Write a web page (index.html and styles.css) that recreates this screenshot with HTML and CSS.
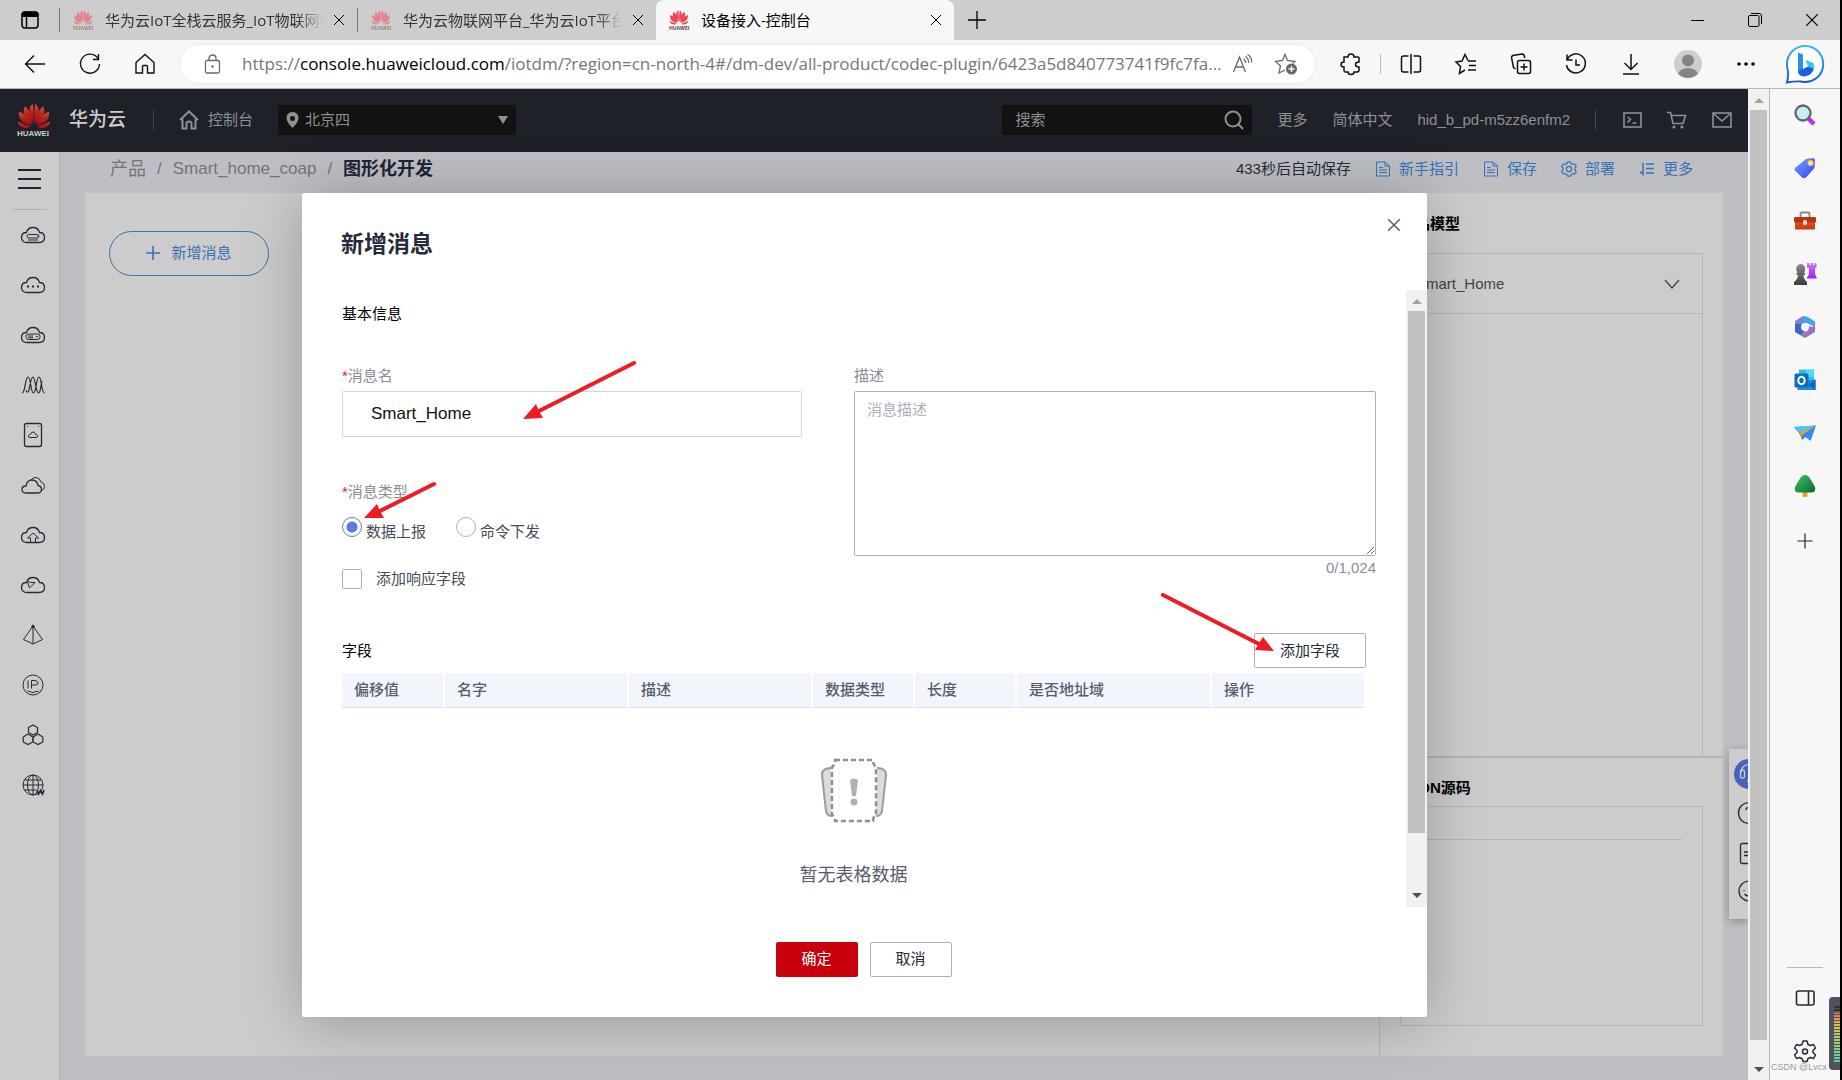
FILE: index.html
```html
<!DOCTYPE html>
<html lang="zh-CN">
<head>
<meta charset="utf-8">
<title>设备接入-控制台</title>
<link rel="stylesheet" href="styles.css">
</head>
<body>
<svg class="defs" aria-hidden="true">
  <defs>
    <linearGradient id="petal-red" x1="0" y1="0" x2="0" y2="1"><stop offset="0" stop-color="#c9573a"/><stop offset="0.5" stop-color="#b81f1c"/><stop offset="1" stop-color="#a01015"/></linearGradient>
    <linearGradient id="bing" x1="0" y1="0" x2="0" y2="1"><stop offset="0" stop-color="#35bdf0"/><stop offset="1" stop-color="#1b56d8"/></linearGradient>
    <linearGradient id="tag" x1="0" y1="0" x2="1" y2="1"><stop offset="0" stop-color="#6aa8ff"/><stop offset="1" stop-color="#3d3dff"/></linearGradient>
    <linearGradient id="box" x1="0" y1="0" x2="0" y2="1"><stop offset="0" stop-color="#e0521c"/><stop offset="1" stop-color="#c93a0c"/></linearGradient>
    <linearGradient id="rook" x1="0" y1="0" x2="0" y2="1"><stop offset="0" stop-color="#c77dff"/><stop offset="1" stop-color="#a31cf5"/></linearGradient>
    <linearGradient id="pawn" x1="0" y1="0" x2="0" y2="1"><stop offset="0" stop-color="#8a8a8a"/><stop offset="1" stop-color="#3c3c3c"/></linearGradient>
    <linearGradient id="tree" x1="0" y1="0" x2="1" y2="1"><stop offset="0" stop-color="#3ac463"/><stop offset="1" stop-color="#0a6b32"/></linearGradient>
    <symbol id="petals" viewBox="0 0 40 30">
      <path d="M19.500 23C14 15 12 5 18.500 0.500C19.500 5 20 15 19.500 23ZM20.500 23C26 15 28 5 21.500 0.500C20.500 5 20 15 20.500 23Z"/>
      <path d="M18 24C10 19 5 10 9.500 3.500C14 7 17.500 15 18 24ZM22 24C30 19 35 10 30.500 3.500C26 7 22.500 15 22 24Z"/>
      <path d="M17 25.500C7 25 0.500 18 2.500 10C9 12 14.500 18 17 25.500ZM23 25.500C33 25 39.500 18 37.500 10C31 12 25.500 18 23 25.500Z"/>
      <path d="M16.500 27C10 31.500 3 29 0.800 21.500C6 24 12 26.500 16.500 27ZM23.500 27C30 31.500 37 29 39.200 21.500C34 24 28 26.500 23.500 27Z"/>
    </symbol>
    <symbol id="cloud" viewBox="0 0 26 20"><path d="M7 17.500C3.500 17.500 1.500 15.500 1.500 12.500C1.500 9.500 3.500 7.500 6.500 7.500C7.500 4 10 2.500 13 2.500C16 2.500 18.500 4 19.500 7.500C22.500 7.500 24.500 9.500 24.500 12.500C24.500 15.500 22.500 17.500 19 17.500Z" stroke-width="1.300"/></symbol>
    <symbol id="cross" viewBox="0 0 12 12"><path d="M1 1L11 11M11 1L1 11"/></symbol>
    <symbol id="doc" viewBox="0 0 16 16"><path d="M1.500 1H10L14.500 5V15H1.500ZM10 1V5H14.500M4 6.500H8M4 9H12M4 11.500H12"/></symbol>
  </defs>
</svg>

<header class="tabbar">
  <button class="tab-actions" aria-label="标签操作">
    <svg class="ln" width="20" height="20" viewBox="0 0 20 20"><rect x="2" y="2" width="16" height="16" rx="3" stroke-width="1.500"/><path d="M2 4Q2 2 4 2H16Q18 2 18 4V6.500H2Z" fill="#000"/><path d="M6.500 6V18" stroke-width="1.500"/></svg>
  </button>
  <div class="tab">
    <div class="favicon faded"><svg width="20" height="15"><use href="#petals"/></svg><span>HUAWEI</span></div>
    <span class="tab-title">华为云IoT全栈云服务_IoT物联网解</span>
    <button class="tab-close" aria-label="关闭"><svg class="ln" width="12" height="12"><use href="#cross"/></svg></button>
  </div>
  <div class="tab">
    <div class="favicon faded"><svg width="20" height="15"><use href="#petals"/></svg><span>HUAWEI</span></div>
    <span class="tab-title">华为云物联网平台_华为云IoT平台</span>
    <button class="tab-close" aria-label="关闭"><svg class="ln" width="12" height="12"><use href="#cross"/></svg></button>
  </div>
  <div class="tab active">
    <div class="favicon"><svg width="20" height="15"><use href="#petals"/></svg><span>HUAWEI</span></div>
    <span class="tab-title">设备接入-控制台</span>
    <button class="tab-close" aria-label="关闭"><svg class="ln" width="12" height="12"><use href="#cross"/></svg></button>
  </div>
  <button class="new-tab" aria-label="新建标签"><svg class="ln" width="18" height="18" viewBox="0 0 18 18"><path d="M9 0V18M0 9H18" stroke-width="1.300"/></svg></button>
  <div class="window-buttons">
    <button aria-label="最小化"><svg class="ln" width="14" height="14" viewBox="0 0 14 14"><path d="M0 7.500H13"/></svg></button>
    <button aria-label="还原"><svg class="ln" width="14" height="14" viewBox="0 0 14 14"><rect x="0.500" y="2.500" width="10.500" height="11" rx="1.500"/><path d="M3 0.500H11Q13.500 0.500 13.500 3V11"/></svg></button>
    <button aria-label="关闭窗口"><svg class="ln" width="14" height="14" viewBox="0 0 12 12"><use href="#cross"/></svg></button>
  </div>
</header>

<div class="toolbar">
  <div class="nav-buttons">
    <button aria-label="后退"><svg class="ln" width="22" height="22" viewBox="0 0 22 22"><path d="M21 11H2M10 2.500L1.500 11L10 19.500" stroke-width="1.400"/></svg></button>
    <button aria-label="刷新"><svg class="ln" width="22" height="22" viewBox="0 0 22 22"><path d="M19 5.500A9.500 9.500 0 1 0 20.500 11M19.500 1V6.500H14" stroke-width="1.400"/></svg></button>
    <button aria-label="主页"><svg class="ln" width="22" height="22" viewBox="0 0 22 22"><path d="M2 9.500L11 1.500L20 9.500V20H13.500V13.500Q13.500 12.500 12.500 12.500H9.500Q8.500 12.500 8.500 13.500V20H2Z" stroke-width="1.400"/></svg></button>
  </div>
  <div class="address">
    <svg class="ln gray" width="18" height="20" viewBox="0 0 18 20"><rect x="1.500" y="6.500" width="14" height="12.500" rx="1.500" stroke-width="1.300"/><path d="M5 6.500V4.500Q5 1 8.500 1Q12 1 12 4.500V6.500" stroke-width="1.300"/><circle cx="8.500" cy="12.500" r="0.800" fill="#555"/></svg>
    <a class="url" href="#">https://<b>console.huaweicloud.com</b>/iotdm/?region=cn-north-4#/dm-dev/all-product/codec-plugin/6423a5d840773741f9fc7fa...</a>
    <button aria-label="朗读"><svg class="ln gray" width="22" height="20" viewBox="0 0 22 20"><path d="M1.500 18L7.500 3L13.500 18M3.500 13H11.500M11.500 5Q14 6.500 13.500 9M13.500 2.500Q17 5 16.500 9M15.500 0.500Q20 3 19.500 8.500" stroke-width="1.300"/></svg></button>
    <button aria-label="收藏"><svg class="ln gray" width="24" height="22" viewBox="0 0 24 22"><path d="M11 17L5 20L6.500 13L1.500 8.500L8.500 7.500L11 1.500L13.500 7.500L21 8.500L18.500 10.500" stroke-width="1.300"/><circle cx="17.500" cy="16" r="5.500" fill="#666" stroke="none"/><path d="M17.500 13V19M14.500 16H20.500" stroke="#fff" stroke-width="1.300"/></svg></button>
  </div>
  <div class="tools">
    <button aria-label="扩展"><svg class="ln" width="22" height="22" viewBox="0 0 22 22"><path d="M4 4H8Q8 1 11 1Q14 1 14 4H18Q19 4 19 5V9Q15.500 9 15.500 11.500Q15.500 14 19 14V17Q19 19 17 19H14Q14 21.500 11 21.500Q8 21.500 8 19H5Q4 19 4 17V14Q1 14 1 11.500Q1 9 4 9Z" stroke-width="1.500"/></svg></button>
    <span class="tool-divider"></span>
    <button aria-label="分屏"><svg class="ln" width="22" height="22" viewBox="0 0 22 22"><path d="M8.500 3H3.500Q1.500 3 1.500 5V17Q1.500 19 3.500 19H8.500M13.500 3H18.500Q20.500 3 20.500 5V17Q20.500 19 18.500 19H13.500M11 1V21" stroke-width="1.500"/></svg></button>
    <button aria-label="收藏夹"><svg class="ln" width="22" height="22" viewBox="0 0 22 22"><path d="M13 7.500L10 1.500L7 8L1 9L5.500 13.500L4.500 20.500L10 17M13 8H21M14 12.500H21M13 17H21" stroke-width="1.500"/></svg></button>
    <button aria-label="集锦"><svg class="ln" width="22" height="22" viewBox="0 0 22 22"><rect x="7.500" y="7.500" width="13" height="13" rx="2" stroke-width="1.500"/><path d="M14 10.500V17.500M10.500 14H17.500M5.500 16L3.500 14.500L1.500 4.500Q1.500 3 3 2.500L12 1Q14 1 14.500 3.500V5" stroke-width="1.500"/></svg></button>
    <button aria-label="历史记录"><svg class="ln" width="22" height="22" viewBox="0 0 22 22"><path d="M2 7A9.500 9.500 0 1 1 1.500 12M2 1.500V7H7.500M11 6.500V12H15" stroke-width="1.500"/></svg></button>
    <button aria-label="下载"><svg class="ln" width="22" height="22" viewBox="0 0 22 22"><path d="M11 1V16M4.500 10L11 16.500L17.500 10M3 21H19" stroke-width="1.500"/></svg></button>
    <button class="profile" aria-label="个人资料"><svg width="28" height="28" viewBox="0 0 28 28"><clipPath id="av"><circle cx="14" cy="14" r="14"/></clipPath><g clip-path="url(#av)"><rect width="28" height="28" fill="#cfcdca"/><circle cx="14" cy="10.500" r="6" fill="#878380"/><ellipse cx="14" cy="24.500" rx="10" ry="6.500" fill="#878380"/></g></svg></button>
    <button aria-label="更多选项"><svg width="20" height="6" viewBox="0 0 20 6"><circle cx="3" cy="3" r="1.800"/><circle cx="10" cy="3" r="1.800"/><circle cx="17" cy="3" r="1.800"/></svg></button>
    <button class="bing" aria-label="必应"><svg width="40" height="40" viewBox="0 0 40 40"><path d="M20 2A18 18 0 1 1 16 37.500Q10 37 2 38.500Q3.500 33 3 27Q2 24 2 20A18 18 0 0 1 20 2Z" fill="#fff" stroke="url(#bing)" stroke-width="2"/><path d="M13 8.500L18 10.500V26L13 30Z" fill="#2a8df0"/><path d="M13 27L18 25L24 22L29 24Q28 31 19 32.500Q14 32.500 13 27Z" fill="#1c5fe0"/><path d="M20.500 16L27.500 18.500Q30 21 29 25L23 22.500Z" fill="#2fd0d8"/></svg></button>
  </div>
</div>

<div class="workspace">
  <div class="site">
    <header class="site-header">
      <div class="brand">
        <div class="brand-mark"><svg width="34" height="26"><use href="#petals"/></svg><span>HUAWEI</span></div>
        <strong>华为云</strong>
      </div>
      <span class="bar"></span>
      <a class="console-link" href="#"><svg class="ln" width="20" height="20" viewBox="0 0 20 20"><path d="M1 10L10 1.500L19 10M3.500 9V18.500H7.500V13Q7.500 11.500 10 11.500Q12.500 11.500 12.500 13V18.500H16.500V9" stroke-width="2"/></svg>控制台</a>
      <div class="region">
        <svg width="13" height="16" viewBox="0 0 13 16"><path fill="#8d9097" fill-rule="evenodd" d="M6.500 0Q12.500 0.500 12.500 6Q12.500 10 6.500 16Q0.500 10 0.500 6Q0.500 0.500 6.500 0ZM6.500 4A2.500 2.500 0 1 0 6.500 9A2.500 2.500 0 1 0 6.500 4Z"/></svg>
        <select aria-label="区域"><option>北京四</option></select>
        <span class="caret"></span>
      </div>
      <div class="search">
        <input type="text" placeholder="搜索" aria-label="搜索">
        <svg class="ln" width="20" height="20" viewBox="0 0 20 20"><circle cx="9" cy="9" r="7.500" stroke-width="2"/><path d="M14 14L19 19" stroke-width="2"/></svg>
      </div>
      <nav class="account">
        <a href="#">更多</a><a href="#">简体中文</a><a href="#">hid_b_pd-m5zz6enfm2</a>
      </nav>
      <span class="bar account-bar"></span>
      <div class="header-icons">
        <svg class="ln" width="19" height="18" viewBox="0 0 19 18"><rect x="1" y="2" width="17" height="14" stroke-width="1.600"/><path d="M4.500 6L7.500 8.500L4.500 11.500M9.500 12H13.500" stroke-width="1.600"/></svg>
        <svg class="ln" width="20" height="18" viewBox="0 0 20 18"><path d="M0 1.500H3.500L6 12.500H16L18.500 4.500H4.500" stroke-width="1.600"/><circle cx="7" cy="16" r="0.800" stroke-width="1.600"/><circle cx="15" cy="16" r="0.800" stroke-width="1.600"/></svg>
        <svg class="ln" width="20" height="18" viewBox="0 0 20 18"><rect x="1" y="2" width="18" height="14" stroke-width="1.600"/><path d="M2 3L10 10L18 3" stroke-width="1.600"/></svg>
      </div>
    </header>

    <div class="site-body">
      <nav class="rail">
        <button class="menu" aria-label="菜单"><span></span><span></span><span></span></button>
        <div class="rail-icons">
          <a href="#" aria-label="云服务器"><svg class="ln" width="26" height="20" viewBox="0 0 26 20"><use href="#cloud"/><rect x="7" y="9.500" width="12" height="3.500" rx="1.700"/><path d="M8 15H18M17 11.200H18"/></svg></a>
          <a href="#" aria-label="裸金属"><svg class="ln" width="26" height="20" viewBox="0 0 26 20"><use href="#cloud"/><path d="M7 11.500H9M12 11.500H14M17 11.500H19" stroke-width="2"/></svg></a>
          <a href="#" aria-label="云主机"><svg class="ln" width="26" height="20" viewBox="0 0 26 20"><use href="#cloud"/><rect x="6" y="9" width="14" height="5.500" rx="2.500"/><path d="M8 11H13M8 12.800H13M16 11.700H18"/></svg></a>
          <a href="#" aria-label="弹性伸缩"><svg class="ln" width="26" height="20" viewBox="0 0 26 20"><path d="M2 18C5.500 18 5 2 8 2S10.500 18 13.500 18S16 2 19 2S21 18 24.500 18M6 15C6.500 18 8 18 9 15C10.500 8 11 2 13 2S16 18 18.500 18S20.500 10 22 6" stroke-width="1.200"/></svg></a>
          <a href="#" aria-label="硬盘"><svg class="ln" width="26" height="24" viewBox="0 0 26 24"><rect x="4.500" y="0.500" width="17" height="23" rx="2" stroke-width="1.300"/><path d="M10 14.500Q8 14.500 8.500 12.500Q9 11.500 10.500 11.500Q11 9 13 9Q15 9 15.500 11.500Q17 11.500 17.500 12.500Q18 14.500 16 14.500ZM7 3.500H8M18 3.500H19"/></svg></a>
          <a href="#" aria-label="存储"><svg class="ln" width="26" height="20" viewBox="0 0 26 20"><path d="M6 18Q2 18 2 14.500Q2 11 6 11Q7 5 12 5Q17 5 18 10.500Q21.500 11 21.500 14.500Q21.500 18 17 18Z" stroke-width="1.300"/><path d="M11 5Q13 2 16 2.500Q20 3 21 7Q24.500 8 24.500 11.500Q24.500 14.500 22 15"/></svg></a>
          <a href="#" aria-label="上传"><svg class="ln" width="26" height="20" viewBox="0 0 26 20"><use href="#cloud"/><path d="M10.500 17V13H7.500L13 8L18.500 13H15.500V17"/></svg></a>
          <a href="#" aria-label="监控"><svg class="ln" width="26" height="20" viewBox="0 0 26 20"><use href="#cloud"/><path d="M7.500 7L9.500 13L15 7.500Q11 8 8 6.500"/></svg></a>
          <a href="#" aria-label="金字塔"><svg class="ln" width="26" height="20" viewBox="0 0 26 20"><path d="M13 1V19M13 1L3.500 14.500L13 19L22.500 14.500L13 1"/><circle cx="13" cy="1.500" r="1.300" fill="#252b3a"/></svg></a>
          <a href="#" aria-label="弹性公网"><svg class="ln" width="26" height="22" viewBox="0 0 26 22"><circle cx="13" cy="11" r="10"/><path d="M8 6.500V14.500M11.500 14.500V6.500H15Q18 7 18 9Q18 11 15 11H11.500M7.500 17Q13 20 18.500 17"/></svg></a>
          <a href="#" aria-label="区块"><svg class="ln" width="26" height="22" viewBox="0 0 26 22"><path d="M13 1L17.500 3.500V8.500L13 11L8.500 8.500V3.500ZM8 10L12.800 13V18L8 20.500L3.200 18V13ZM18 10L22.800 13V18L18 20.500L13.200 18V13Z" stroke-width="1.200"/></svg></a>
          <a href="#" aria-label="域名"><svg class="ln" width="26" height="22" viewBox="0 0 26 22"><circle cx="13" cy="11" r="10"/><ellipse cx="13" cy="11" rx="5.500" ry="10"/><path d="M13 1V21M3 11H23M4.500 6H21.500M4.500 16H16"/><path d="M17 16L18.500 20L20.500 16.500L22.500 20L24 16" stroke-width="1.700"/></svg></a>
        </div>
      </nav>

      <main class="content">
        <div class="crumb-row">
          <nav class="crumbs"><a class="crumb-root" href="#">产品</a><span>/</span><a href="#">Smart_home_coap</a><span>/</span><strong>图形化开发</strong></nav>
          <div class="page-actions">
            <span class="autosave">433秒后自动保存</span>
            <a href="#"><svg class="ln" width="16" height="16"><use href="#doc"/></svg>新手指引</a>
            <a href="#"><svg class="ln" width="16" height="16"><use href="#doc"/></svg>保存</a>
            <a href="#"><svg class="ln" width="16" height="16" viewBox="0 0 16 16"><path d="M6 2.500L6.500 0.800H9.500L10 2.500L12 3.500L13.800 3L15.300 5.500L14 7V9L15.300 10.500L13.800 13L12 12.500L10 13.500L9.500 15.200H6.500L6 13.500L4 12.500L2.200 13L0.700 10.500L2 9V7L0.700 5.500L2.200 3L4 3.500Z" stroke-width="1.200" stroke-linejoin="round"/><circle cx="8" cy="8" r="2.600" stroke-width="1.200"/></svg>部署</a>
            <a href="#"><svg class="ln" width="16" height="16" viewBox="0 0 16 16"><path d="M4 2V13.500L1 10.500M7 3H15M7 7.500H15M7 12H15" stroke-width="1.500"/></svg>更多</a>
          </div>
        </div>
        <div class="board">
          <section class="canvas">
            <button class="add-message"><svg class="ln" width="14" height="14" viewBox="0 0 14 14"><path d="M7 0V14M0 7H14" stroke-width="1.600"/></svg>新增消息</button>
          </section>
          <aside class="model">
            <section class="model-top">
              <h2>产品模型</h2>
              <div class="model-box">
                <button class="model-row">Smart_Home<svg class="ln" width="16" height="10" viewBox="0 0 16 10"><path d="M1 1L8 9L15 1" stroke-width="1.300"/></svg></button>
              </div>
            </section>
            <section class="model-bottom">
              <h2>JSON源码</h2>
              <div class="json-box"><hr></div>
            </section>
          </aside>
        </div>
      </main>
    </div>

    <div class="helper">
      <svg width="30" height="170" viewBox="0 0 30 170" fill="none" stroke="#252b3a" stroke-width="1.300"><circle cx="20" cy="25" r="15" fill="#4763b5" stroke="none"/><path d="M12 24Q12 16 20 15.500" stroke="#ccc"/><rect x="11.500" y="21" width="4" height="8" rx="1.500" stroke="#ccc"/><path d="M18 32H20" stroke="#ccc"/><circle cx="20" cy="64" r="10.500"/><path d="M17 61Q17 58.500 20 58.500"/><rect x="11.500" y="94.500" width="18" height="20" rx="2"/><path d="M15 103H20M15 106.500H20"/><circle cx="20" cy="142" r="10"/><path d="M15 141V142M15.500 145Q17 147 20 147"/></svg>
    </div>

    <div class="modal-layer">
      <form class="modal" role="dialog" aria-labelledby="dialog-title">
        <div class="modal-head">
          <h1 id="dialog-title">新增消息</h1>
          <button type="button" aria-label="关闭对话框"><svg class="ln" width="14" height="14" viewBox="0 0 12 12"><path d="M1 1L11 11M11 1L1 11" stroke-width="1.300"/></svg></button>
        </div>
        <div class="modal-body">
          <div class="modal-content">
            <h3>基本信息</h3>
            <div class="fields">
              <div class="col-left">
                <label class="caption" for="msg-name"><i>*</i>消息名</label>
                <input class="text-input" id="msg-name" type="text" value="Smart_Home">
                <fieldset>
                  <legend class="caption"><i>*</i>消息类型</legend>
                  <label class="radio"><input type="radio" name="kind" checked><span>数据上报</span></label>
                  <label class="radio"><input type="radio" name="kind"><span>命令下发</span></label>
                </fieldset>
                <label class="check"><input type="checkbox">添加响应字段</label>
              </div>
              <div class="col-right">
                <label class="caption" for="msg-desc">描述</label>
                <textarea id="msg-desc" placeholder="消息描述"></textarea>
                <span class="counter">0/1,024</span>
              </div>
            </div>
            <div class="table-head"><h3>字段</h3><button type="button" class="plain">添加字段</button></div>
            <table>
              <thead><tr><th class="w-s">偏移值</th><th class="w-m">名字</th><th class="w-m">描述</th><th class="w-s">数据类型</th><th class="w-s">长度</th><th class="w-l">是否地址域</th><th>操作</th></tr></thead>
              <tbody><tr><td colspan="7">
                <svg width="68" height="66" viewBox="0 0 68 66" fill="none"><path d="M11 10Q2 10 2 17L6 53Q7 58 12 58M57 10Q66 10 66 17L62 53Q61 58 56 58" fill="#dcdcdc" stroke="#9c9c9c" stroke-width="2"/><path d="M15 2H53Q53 7 56 9V57Q53 58 53 63H15Q15 59 12 57V9Q15 7 15 2Z" fill="#fff" stroke="#8f8f8f" stroke-width="2.500" stroke-dasharray="5 3"/><path d="M30 22Q34 19 38 22L36 38H32Z" fill="#b0b0b0"/><circle cx="34" cy="44" r="3.500" fill="#b0b0b0"/></svg>
                <p>暂无表格数据</p>
              </td></tr></tbody>
            </table>
          </div>
          <div class="scroll"><span class="up"></span><div class="thumb"></div><span class="down"></span></div>
        </div>
        <div class="modal-foot"><button type="button" class="primary">确定</button><button type="button" class="plain">取消</button></div>
        <svg class="arrows" width="1125" height="825" viewBox="0 0 1125 825" fill="#ee1c24" stroke="#ee1c24" stroke-width="4" stroke-linecap="round"><path d="M332 170L235 219M132 291L76 319M861 402L957 451"/><path stroke="none" d="M221 226L234 211L237 218L241 225ZM62 325L75 311L78 318L82 325ZM972 458L961 444L957 450L953 457Z"/></svg>
      </form>
    </div>
  </div>
  <div class="scroll page-scroll"><span class="up"></span><div class="thumb"></div><span class="down"></span></div>

  <aside class="edge">
    <div class="edge-apps">
      <a href="#" aria-label="搜索"><svg width="24" height="24" viewBox="0 0 24 24"><path d="M15 15L21 21" stroke="#c02cf5" stroke-width="4.500"/><circle cx="10" cy="10" r="7.500" fill="#c9ecfb" stroke="#666" stroke-width="2.300"/></svg></a>
      <a href="#" aria-label="购物"><svg width="24" height="24" viewBox="0 0 24 24"><path d="M13 3L20 2Q22 2 22 4L21.500 12L13 21.500Q11 23 9 21.500L2 14.500Q1 13 2 12Z" fill="url(#tag)"/><circle cx="17.500" cy="7" r="2.200" fill="#fff" stroke="#ffc83d" stroke-width="1.700"/></svg></a>
      <a href="#" aria-label="工具"><svg width="24" height="24" viewBox="0 0 24 24"><path d="M7.500 8V5Q7.500 3.500 9 3.500H15Q16.500 3.500 16.500 5V8" fill="none" stroke="#8a8a8a" stroke-width="1.800"/><rect x="2" y="12" width="20" height="8.500" rx="1" fill="url(#box)"/><rect x="1" y="8" width="22" height="5.500" rx="1" fill="#b8350f"/><rect x="10" y="11" width="4" height="5" rx="1.500" fill="#d6d6d6"/></svg></a>
      <a href="#" aria-label="游戏"><svg width="24" height="24" viewBox="0 0 24 24"><path d="M14 1H16.500V3H18V1H20V3H21.500V1H23.500V6H22V12L24 16.500H13.500L16 12V6H14Z" fill="url(#rook)"/><path d="M3.500 8A4.500 4.500 0 1 1 12 8Q12 9.500 11 11H12V13H10.500Q10.500 17 14 20V23H1V20Q5 17 5 13H3.500V11H4.500Q3.500 9.500 3.500 8Z" fill="url(#pawn)"/></svg></a>
      <a href="#" aria-label="Microsoft 365"><svg width="24" height="24" viewBox="0 0 24 24"><path d="M10 1L2 6V17L7 20L9 17V10L12 8Z" fill="#8b7ad8"/><path d="M10 1L14 1.500L22 6.500V12L14 8L9 10Z" fill="#3fa7e8"/><path d="M22 8V17L12 23L7 20L15 15.500V11L20 12Z" fill="#9c6fc4"/><path d="M2 9L2 17L8 20L13 15.500L9 13V9Z" fill="#3b66c9"/><circle cx="12" cy="12" r="4" fill="#f7f7f7"/></svg></a>
      <a href="#" aria-label="Outlook"><svg width="24" height="24" viewBox="0 0 24 24"><rect x="6" y="1.500" width="15" height="13" fill="#35b8f1"/><path d="M13 2H21V9H13Z" fill="#50d9ff"/><path d="M4.500 12H22.500V22H4.500Z" fill="#1a8fe0"/><path d="M15 17L22.500 11V22Z" fill="#1266b8"/><rect x="1.500" y="5.500" width="14" height="14" rx="1.500" fill="#0f6cbd"/><ellipse cx="8.500" cy="12.500" rx="3.200" ry="3.700" fill="none" stroke="#fff" stroke-width="2"/></svg></a>
      <a href="#" aria-label="发送"><svg width="24" height="24" viewBox="0 0 24 24"><path d="M1 6L23 4.500L17.500 20L12.500 16L9 19L6 12Z" fill="#2f8cf0"/><path d="M1 6L23 4.500L6.500 11.500Z" fill="#4cc4f8"/><path d="M6.500 11.500L23 4.500L9 14V19Z" fill="#f2a516"/></svg></a>
      <a href="#" aria-label="树"><svg width="24" height="24" viewBox="0 0 24 24"><rect x="9.500" y="16" width="5" height="7" rx="1" fill="#f2a01c"/><path d="M12 1Q15 1 17 4.500Q20 9 22 13Q23.500 18.500 18 18.500H6Q0.500 18.500 2 13Q4 9 7 4.500Q9 1 12 1Z" fill="url(#tree)"/></svg></a>
      <button aria-label="添加"><svg class="ln" width="24" height="24" viewBox="0 0 24 24"><path d="M12 4.500V19.500M4.500 12H19.500" stroke="#222" stroke-width="1.200"/></svg></button>
    </div>
    <div class="edge-tools">
      <button aria-label="侧栏"><svg class="ln" width="24" height="24" viewBox="0 0 24 24"><rect x="3.500" y="5" width="17.500" height="14" rx="2" stroke-width="1.600"/><path d="M15.500 5V19" stroke-width="1.600"/></svg></button>
      <button aria-label="设置"><svg class="ln" width="24" height="24" viewBox="0 0 24 24"><path d="M10 2H14L15 5.500L17.500 6.500L20.500 5.500L22.500 9L20 11.500V13.500L22.500 16L20.500 19.500L17.500 18.500L15 19.500L14 22.500H10L9 19.500L6.500 18.500L3.500 19.500L1.500 16L4 13.500V11.500L1.500 9L3.500 5.500L6.500 6.500L9 5.500Z" stroke-width="1.500" stroke-linejoin="round"/><circle cx="12" cy="12.500" r="2.500" stroke-width="1.500"/></svg></button>
    </div>
    <span class="watermark">CSDN @Lvcx</span>
    <div class="meter"><span></span></div>
  </aside>
</div>
</body>
</html>
```
FILE: styles.css
```css
* { box-sizing: border-box; }

body {
  margin: 0;
  min-height: 100vh;
  display: flex;
  flex-direction: column;
  background: #f7f7f7;
  border-right: 2px solid #000;
  color: #252b3a;
  font: 15px/20px "Liberation Sans", "Noto Sans CJK SC", sans-serif;
}

button, input, select, textarea { font: inherit; color: inherit; margin: 0; }
button { padding: 0; border: 0; background: none; display: flex; align-items: center; justify-content: center; }
a { color: inherit; text-decoration: none; }
h1, h2, h3, p { margin: 0; }
svg { flex: none; display: block; }
.defs { position: absolute; width: 0; height: 0; }
.ln { fill: none; stroke: currentColor; stroke-width: 1; overflow: visible; }
.gray { color: #6a6a6a; }

/* Browser tabs */
.tabbar {
  display: flex;
  align-items: center;
  height: 40px;
  background: #cdcdcd;
  color: #000;
  font-family: "Open Sans", "Noto Sans CJK SC", sans-serif;
}
.tab-actions { width: 60px; height: 24px; border-right: 1px solid #777; }
.tab {
  display: flex;
  align-items: center;
  width: 298px;
  height: 24px;
  padding: 0 12px 0 13px;
  border-right: 1px solid #777;
}
.tab:has(+ .active) { border-right: 0; }
.tab.active {
  height: 40px;
  border: 0;
  border-radius: 8px 8px 0 0;
  background: #f7f7f7;
}
.favicon { width: 20px; color: #5a3a3a; fill: #f5424f; font-size: 5px; line-height: 6px; font-weight: bold; text-align: center; }
.faded { opacity: .5; }
.tab-title {
  flex: 1;
  margin: 0 10px 0 12px;
  overflow: hidden;
  white-space: nowrap;
}
.tab:not(.active) .tab-title {
  color: #333;
  -webkit-mask-image: linear-gradient(90deg, #000 88%, transparent);
  mask-image: linear-gradient(90deg, #000 88%, transparent);
}
.new-tab { width: 46px; }
.window-buttons { display: flex; margin-left: auto; }
.window-buttons button { width: 57px; height: 40px; }

/* Browser toolbar */
.toolbar {
  display: flex;
  align-items: center;
  height: 48px;
  color: #111;
}
.nav-buttons { display: flex; width: 180px; padding-left: 7px; }
.nav-buttons button { width: 55px; }
.address {
  flex: 1;
  display: flex;
  align-items: center;
  gap: 20px;
  min-width: 0;
  height: 38px;
  padding: 0 17px 0 24px;
  border-radius: 19px;
  background: #fff;
  box-shadow: 0 0 4px rgba(0, 0, 0, .08);
}
.url {
  flex: 1;
  margin-right: -14px;
  overflow: hidden;
  color: #767676;
  font: 17px/24px "Open Sans", sans-serif;
  white-space: nowrap;
}
.url b { color: #000; font-weight: normal; }
.tools { display: flex; align-items: center; padding: 0 3px 0 8px; }
.tools button { width: 55px; height: 40px; }
.tools .profile { width: 60px; }
.tools .bing { width: 64px; }
.tool-divider { width: 1px; height: 20px; background: #bbb; margin: 0 2px; }

/* Window body */
.workspace { flex: 1; display: flex; border-top: 1px solid #b8b8b8; }
.site {
  position: relative;
  flex: 1;
  display: flex;
  flex-direction: column;
  min-width: 0;
  background: #bebfc4;
  overflow: hidden;
}

.site-header {
  display: flex;
  align-items: center;
  height: 63px;
  padding: 0 16px 1px 17px;
  background: #1f2129;
  color: #8d9097;
}
.brand { display: flex; align-items: center; width: 136px; gap: 18px; color: #ccc; }
.brand-mark { width: 34px; fill: url(#petal-red); font-size: 8px; line-height: 8px; font-weight: bold; }
.brand-mark svg { margin-bottom: 1px; }
.brand strong { font-size: 19px; font-weight: 500; }
.bar { width: 1px; height: 20px; background: #43464f; }
.console-link { display: flex; align-items: center; gap: 9px; padding: 0 25px; }
.region, .search { display: flex; align-items: center; height: 30px; border-radius: 2px; background: #121212; }
.region { width: 238px; padding: 0 8px; }
.region select { flex: 1; padding: 0 6px; border: 0; background: none; appearance: none; }
.caret { border: 5px solid transparent; border-top: 8px solid #8d9097; border-bottom: 0; }
.search { width: 250px; margin-left: auto; padding: 0 8px 0 13px; }
.search input { flex: 1; min-width: 0; padding: 0; border: 0; background: none; outline: 0; }
.search input::placeholder { color: #8d9097; }
.account { display: flex; gap: 25px; padding: 0 25px; }
.header-icons { display: flex; gap: 25px; padding-left: 27px; }

.site-body { flex: 1; display: flex; }
.rail { width: 60px; border-right: 1px solid #b0b1b8; background: #ccc; }
.menu { flex-direction: column; justify-content: center; gap: 7px; width: 34px; height: 58px; margin: 0 0 0 13px; padding: 0 2px 4px 0; border-bottom: 1px solid #adafb5; }
.menu span { width: 23px; height: 2px; background: #1f2534; }
.rail-icons { display: flex; flex-direction: column; }
.rail-icons a { display: flex; align-items: center; justify-content: center; height: 50px; padding-left: 6px; }

.content { flex: 1; display: flex; flex-direction: column; min-width: 0; padding: 0 25px 24px; }
.crumb-row { display: flex; justify-content: space-between; align-items: center; height: 41px; padding: 0 30px 7px 25px; }
.crumbs { display: flex; gap: 11px; color: #72757e; font-size: 17px; }
.crumb-root { font-size: 18px; }
.crumbs strong { color: #1f2534; font-size: 18px; }
.page-actions { display: flex; gap: 24px; color: #3871b4; }
.page-actions a { display: flex; align-items: center; gap: 8px; }
.autosave { color: #252b3a; }

.board { flex: 1; display: flex; background: #ccc; }
.canvas { flex: 1; padding: 38px 24px; }
.add-message {
  gap: 11px;
  width: 160px;
  height: 45px;
  padding-bottom: 2px;
  border: 1px solid #3871b4;
  border-radius: 23px;
  color: #3871b4;
}
.model { display: flex; flex-direction: column; width: 344px; border-left: 1px solid #b5b5b5; }
.model h2 { color: #000; font-size: 15px; line-height: 20px; }
.model-top { flex: 1; display: flex; flex-direction: column; padding: 21px 20px 0; border-bottom: 2px solid #b5b5b5; }
.model-top h2 { height: 39px; }
.model-box { flex: 1; border: 1px solid #b5b5b5; border-bottom: 0; }
.model-row { justify-content: space-between; width: 100%; height: 60px; padding: 0 22px 0 15px; border-bottom: 1px solid #b5b5b5; color: #444; }
.model-bottom { padding: 20px 20px 30px; }
.model-bottom h2 { height: 28px; }
.json-box { height: 220px; padding: 32px 20px; border: 1px solid #b5b5b5; }
.json-box hr { margin: 0; border: 0; border-top: 1px solid #b5b5b5; }

.helper {
  position: absolute;
  right: 0;
  top: 660px;
  width: 19px;
  overflow: hidden;
  background: #ccc;
  box-shadow: 0 2px 10px rgba(0, 0, 0, .3);
}

/* Dialog */
.modal-layer {
  position: absolute;
  inset: 104px 0 0;
  display: flex;
  justify-content: center;
  align-items: flex-start;
  padding-right: 19px;
}
.modal {
  position: relative;
  width: 1125px;
  padding-bottom: 40px;
  border-radius: 2px;
  background: #fff;
  box-shadow: 0 6px 60px rgba(0, 0, 0, .26);
}
.modal-head { display: flex; justify-content: space-between; height: 97px; padding: 25px 26px 0 39px; }
.modal-head h1 { padding-top: 10px; font-size: 23px; line-height: 32px; }
.modal-head button { height: 14px; color: #575d6c; }
.modal-body { display: flex; }
.modal-content { flex: 1; padding: 14px 40px 0; }
.modal-content h3 { color: #000; font-size: 15px; line-height: 20px; font-weight: normal; }
.fields { display: grid; grid-template-columns: 460px 1fr; column-gap: 52px; margin-right: -10px; padding-top: 42px; }
.caption { display: block; padding: 0; margin-bottom: 5px; color: #8a8e99; line-height: 20px; }
.caption i { color: #e02128; font-style: normal; }
.text-input { display: block; width: 100%; height: 46px; padding: 0 28px; border: 1px solid #d5d6da; border-radius: 2px; color: #111; font-size: 17px; }
fieldset { display: flex; gap: 30px; margin: 45px 0 0; padding: 0; border: 0; }
legend.caption { margin-bottom: 15px; }
.radio { display: flex; gap: 4px; height: 30px; }
.radio span { padding-top: 5px; color: #464c59; }
.radio input, .check input { flex: none; appearance: none; width: 20px; height: 20px; margin: 0; border: 1px solid #adb0b8; background: #fff; }
.radio input { border-radius: 10px; }
.radio input:checked { border-color: #5e7ce0; background: radial-gradient(circle, #5e7ce0 5px, #fff 6px); }
.check { display: flex; align-items: center; gap: 14px; width: 200px; height: 20px; margin-top: 22px; color: #464c59; }
.check input { border-radius: 2px; }
.col-right { display: flex; flex-direction: column; }
textarea { height: 165px; padding: 8px 12px; border: 1px solid #adb0b8; border-radius: 2px; resize: vertical; }
textarea::placeholder { color: #adb0b8; }
.counter { align-self: flex-end; padding-top: 2px; color: #8a8e99; }
.table-head { display: flex; justify-content: space-between; align-items: center; height: 40px; margin-top: 44px; padding-bottom: 5px; }
.plain, .primary { width: 82px; height: 35px; border-radius: 2px; }
.plain { border: 1px solid #adb0b8; color: #252b3a; }
.table-head .plain { width: 112px; }
table { width: 100%; border-collapse: collapse; table-layout: fixed; }
th { height: 34px; padding: 0 12px; border-right: 2px solid #fff; border-bottom: 1px solid #dfe1e6; background: #f2f5fc; color: #575d6c; font-weight: 500; text-align: left; }
.w-s { width: 102px; }
.w-m { width: 184px; }
.w-l { width: 195px; }
td { padding: 50px 0 20px; color: #575d6c; font-size: 18px; line-height: 24px; text-align: center; }
td svg { display: inline-block; }
td p { margin-top: 33px; }
.modal-foot { display: flex; justify-content: center; gap: 12px; padding: 35px 2px 0 0; }
.primary { background: #c7000b; color: #fff; }
.arrows { position: absolute; left: 0; top: 0; pointer-events: none; }

/* Scroll bars */
.scroll { display: flex; flex-direction: column; align-items: center; width: 21px; padding: 9px 0; background: #f1f1f1; }
.thumb { flex: 1; width: 17px; margin: 7px 0 60px; background: #c1c1c1; }
.up { border: 5px solid transparent; border-bottom-color: #a3a3a3; border-top: 0; }
.down { border: 5px solid transparent; border-top-color: #505050; border-bottom: 0; }
.page-scroll { border-right: 1px solid #b8b8b8; width: 22px; padding-bottom: 8px; }
.page-scroll .thumb { margin-bottom: 27px; }

/* Browser side bar */
.edge {
  position: relative;
  display: flex;
  flex-direction: column;
  justify-content: space-between;
  align-items: center;
  width: 70px;
}
.edge-apps { display: flex; flex-direction: column; margin-top: -1px; }
.edge a, .edge button { display: flex; align-items: center; justify-content: center; width: 36px; height: 53px; }
.edge-tools { padding: 3px 0; border-top: 1px solid #b8b8b8; }
.edge-apps button { height: 58px; }
.watermark { position: absolute; left: 1px; bottom: 6px; color: #999; font-size: 9px; line-height: 14px; white-space: nowrap; }
.meter { position: absolute; right: -2px; bottom: 10px; width: 13px; height: 73px; padding: 8px 2px 8px 5px; border-radius: 4px 0 0 4px; background: #50535f; }
.meter span {
  display: block;
  height: 100%;
  background:
    repeating-linear-gradient(#50535f 0 1px, transparent 1px 3px),
    linear-gradient(#333 0 12%, #e56a54 14%, #dfc04f 35%, #a9cf62 60%, #4fd0a8);
}
```
